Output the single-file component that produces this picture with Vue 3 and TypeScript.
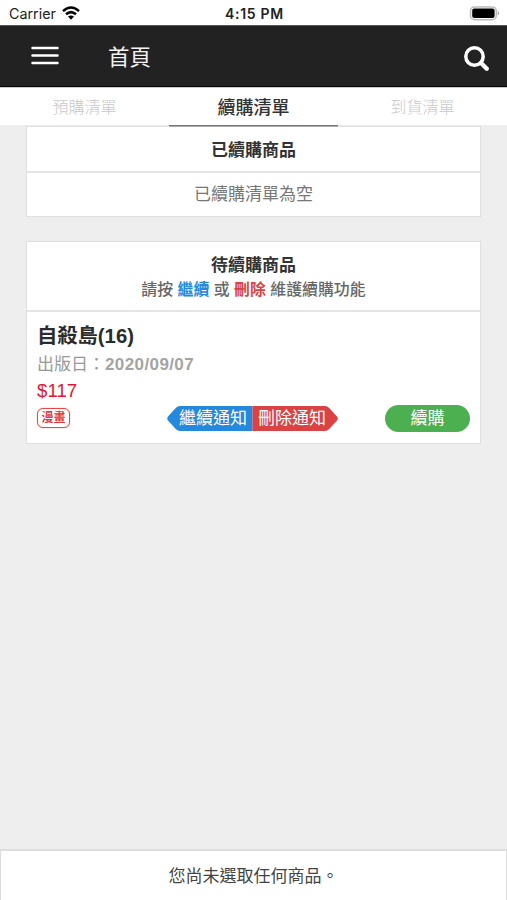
<script setup lang="ts">
import { ref } from 'vue'

interface Tab {
  id: string
  label: string
}

interface Item {
  title: string
  date: string
  price: number
  category: string
}

const tabs: Tab[] = [
  { id: 'preorder', label: '預購清單' },
  { id: 'renew', label: '續購清單' },
  { id: 'arrived', label: '到貨清單' },
]
const active = ref('renew')
const items: Item[] = [
  { title: '自殺島(16)', date: '2020/09/07', price: 117, category: '漫畫' },
]
</script>

<template>
  <div class="screen">
    <div class="status">
      <div class="carrier">
        <span>Carrier</span>
        <svg class="wifi" width="18" height="14" viewBox="0 0 18 14">
          <path d="M1 5.2Q9-2.2 17 5.2M4 8.3Q9 3.9 14 8.3" fill="none" stroke="#000" stroke-width="2.5" />
          <path d="M6 10.6Q9 8.2 12 10.6L9 13.7Z" />
        </svg>
      </div>
      <div class="clock">4:15 PM</div>
      <div class="power">
        <svg width="31" height="15" viewBox="0 0 31 15">
          <rect x="1.5" y=".9" width="25.8" height="12.8" rx="4" fill="#fff" stroke="#bcbcbc" stroke-width="1.5" />
          <rect x="3.2" y="2.5" width="22.4" height="9.5" rx="2" />
          <path d="M28.7 5Q31.5 7.2 28.7 9.5Z" fill="#a8a8a8" />
        </svg>
      </div>
    </div>

    <header class="bar">
      <button class="icon" aria-label="選單">
        <svg width="28" height="20" viewBox="0 0 28 20">
          <path d="M1.5 2H26.5M1.5 9.5H26.5M1.5 17H26.5" stroke="#fff" stroke-width="2.5" stroke-linecap="round" />
        </svg>
      </button>
      <h1>首頁</h1>
      <button class="icon search" aria-label="搜尋">
        <svg width="26" height="26" viewBox="0 0 26 26" fill="none" stroke="#fff">
          <circle cx="10.5" cy="10.5" r="8.7" stroke-width="3.5" />
          <path d="M17 17L22.8 22.8" stroke-width="4.3" stroke-linecap="round" />
        </svg>
      </button>
    </header>

    <nav class="tabs">
      <button
        v-for="t in tabs"
        :key="t.id"
        class="tab"
        :class="{ on: t.id === active }"
        @click="active = t.id"
      >
        {{ t.label }}
      </button>
    </nav>

    <main class="body">
      <section class="card">
        <div class="head done">已續購商品</div>
        <div class="empty">已續購清單為空</div>
      </section>

      <section class="card">
        <div class="head waiting">
          <div>待續購商品</div>
          <p class="hint">請按 <b class="blue">繼續</b> 或 <b class="red">刪除</b> 維護續購功能</p>
        </div>
        <article v-for="item in items" :key="item.title" class="item">
          <h2>{{ item.title }}</h2>
          <div class="date">出版日：<b>{{ item.date }}</b></div>
          <div class="price">${{ item.price }}</div>
          <div class="actions">
            <span class="tag">{{ item.category }}</span>
            <div class="notify">
              <svg class="shape" width="172" height="25" viewBox="0 0 172 25">
                <path d="M85.5 0H13Q10.5 0 9 1.8L1 10.5Q-.6 12.5 1 14.5L9 23.2Q10.5 25 13 25H85.5Z" fill="#2488dc" />
                <path d="M85.5 0H158Q160.5 0 162 1.8L170 10.5Q171.6 12.5 170 14.5L162 23.2Q160.5 25 158 25H85.5Z" fill="#da4343" />
              </svg>
              <button class="keep">繼續通知</button>
              <button class="drop">刪除通知</button>
            </div>
            <button class="buy">續購</button>
          </div>
        </article>
      </section>
    </main>

    <footer class="foot">您尚未選取任何商品。</footer>
  </div>
</template>

<style>
body {
  background: #eee;
}
</style>

<style scoped>
* {
  box-sizing: border-box;
}
.screen {
  display: flex;
  flex-direction: column;
  width: 100%;
  height: 900px;
  overflow: hidden;
  background: #eee;
  color: #333;
  font-family: "Liberation Sans", "Noto Sans CJK TC", sans-serif;
}
button {
  margin: 0;
  padding: 0;
  border: 0;
  background: none;
  color: inherit;
  font: inherit;
}
svg {
  display: block;
}
.status {
  display: grid;
  grid-template-columns: 1fr auto 1fr;
  align-items: center;
  height: 25px;
  padding: 2px 7px 0 9px;
  background: #fff;
  font-family: Inter, sans-serif;
  font-size: 14px;
  line-height: 22px;
  color: #222;
}
.carrier {
  display: flex;
  align-items: center;
  gap: 6px;
  font-size: 14.3px;
}
.wifi {
  margin-top: -2px;
}
.clock {
  font-weight: 600;
  font-size: 14px;
  letter-spacing: 0.7px;
}
.power {
  display: flex;
  justify-content: flex-end;
}
.bar {
  display: flex;
  align-items: center;
  height: 62px;
  padding: 0 17px 2px 31px;
  background: #222;
  border-top: 1px solid #555;
  border-bottom: 1px solid #080808;
  color: #fff;
}
.bar .icon {
  margin-top: 1px;
}
.bar h1 {
  margin: 5px 0 0 49px;
  font-size: 21.5px;
  font-weight: 400;
  line-height: 30px;
  color: #f2f2f2;
}
.bar .search {
  margin: 7px 0 0 auto;
}
.tabs {
  position: relative;
  z-index: 1;
  display: grid;
  grid-template-columns: repeat(3, 1fr);
  height: 38px;
  background: #fff;
  border-top: 1px solid #ccc;
}
.tab {
  padding-top: 2px;
  font-size: 16px;
  font-weight: 300;
  line-height: 34px;
  color: #c8c8c8;
}
.tab.on {
  font-size: 18px;
  font-weight: 500;
  color: #333;
  box-shadow: 0 1.5px 0 #777;
}
.body {
  display: flex;
  flex-direction: column;
  gap: 24px;
  flex: 1;
  padding: 1px 26px 0;
}
.card {
  background: #fff;
  border: 1px solid #e0e0e0;
  box-shadow: 0 0 1px #e0e0e0;
}
.head {
  border-bottom: 2px solid #e4e4e4;
  text-align: center;
  font-size: 17px;
  font-weight: 700;
}
.done {
  height: 46px;
  padding-top: 1px;
  line-height: 46px;
}
.empty {
  height: 43px;
  line-height: 44px;
  text-align: center;
  font-size: 17px;
  color: #777;
}
.waiting {
  height: 70px;
  padding-top: 11px;
  line-height: 25px;
}
.hint {
  margin: 0;
  font-size: 15.9px;
  font-weight: 500;
  line-height: 24px;
  color: #666;
}
.hint b {
  font-weight: 700;
}
.blue {
  color: #2488dc;
}
.red {
  color: #da4343;
}
.item {
  height: 131px;
  padding: 9px 10px 0;
}
.item h2 {
  margin: 0;
  font-size: 20.3px;
  font-weight: 700;
  line-height: 31px;
  color: #2b2b2b;
}
.date {
  font-size: 17px;
  font-weight: 400;
  line-height: 25px;
  color: #999;
}
.date b {
  color: #a4a4a4;
  letter-spacing: 0.4px;
}
.price {
  margin-bottom: 1px;
  font-size: 18.7px;
  line-height: 27px;
  color: #e8132f;
}
.actions {
  display: flex;
  align-items: center;
  height: 27px;
}
.tag {
  width: 33px;
  height: 20px;
  margin-top: -2px;
  border: 1.5px solid #e84747;
  border-radius: 6px;
  box-shadow: 0 0 1px #e84747;
  text-align: center;
  font-size: 12px;
  font-weight: 700;
  line-height: 18px;
  color: #e03838;
}
.notify {
  position: relative;
  display: flex;
  width: 172px;
  height: 25px;
  margin: -1px 0 0 97px;
  padding: 0 13px 0 12px;
  justify-content: space-between;
  font-size: 17px;
  line-height: 25px;
  color: #fff;
}
.shape {
  position: absolute;
  inset: 0;
}
.notify button {
  position: relative;
}
.buy {
  width: 85px;
  height: 27px;
  margin-left: auto;
  border-radius: 14px;
  background: #4caf50;
  color: #fff;
  font-size: 17px;
  line-height: 26px;
}
.foot {
  height: 51px;
  padding-top: 1px;
  background: #fff;
  border: solid #ddd;
  border-width: 2px 1px 0;
  text-align: center;
  font-size: 17px;
  line-height: 50px;
  color: #444;
}
</style>
